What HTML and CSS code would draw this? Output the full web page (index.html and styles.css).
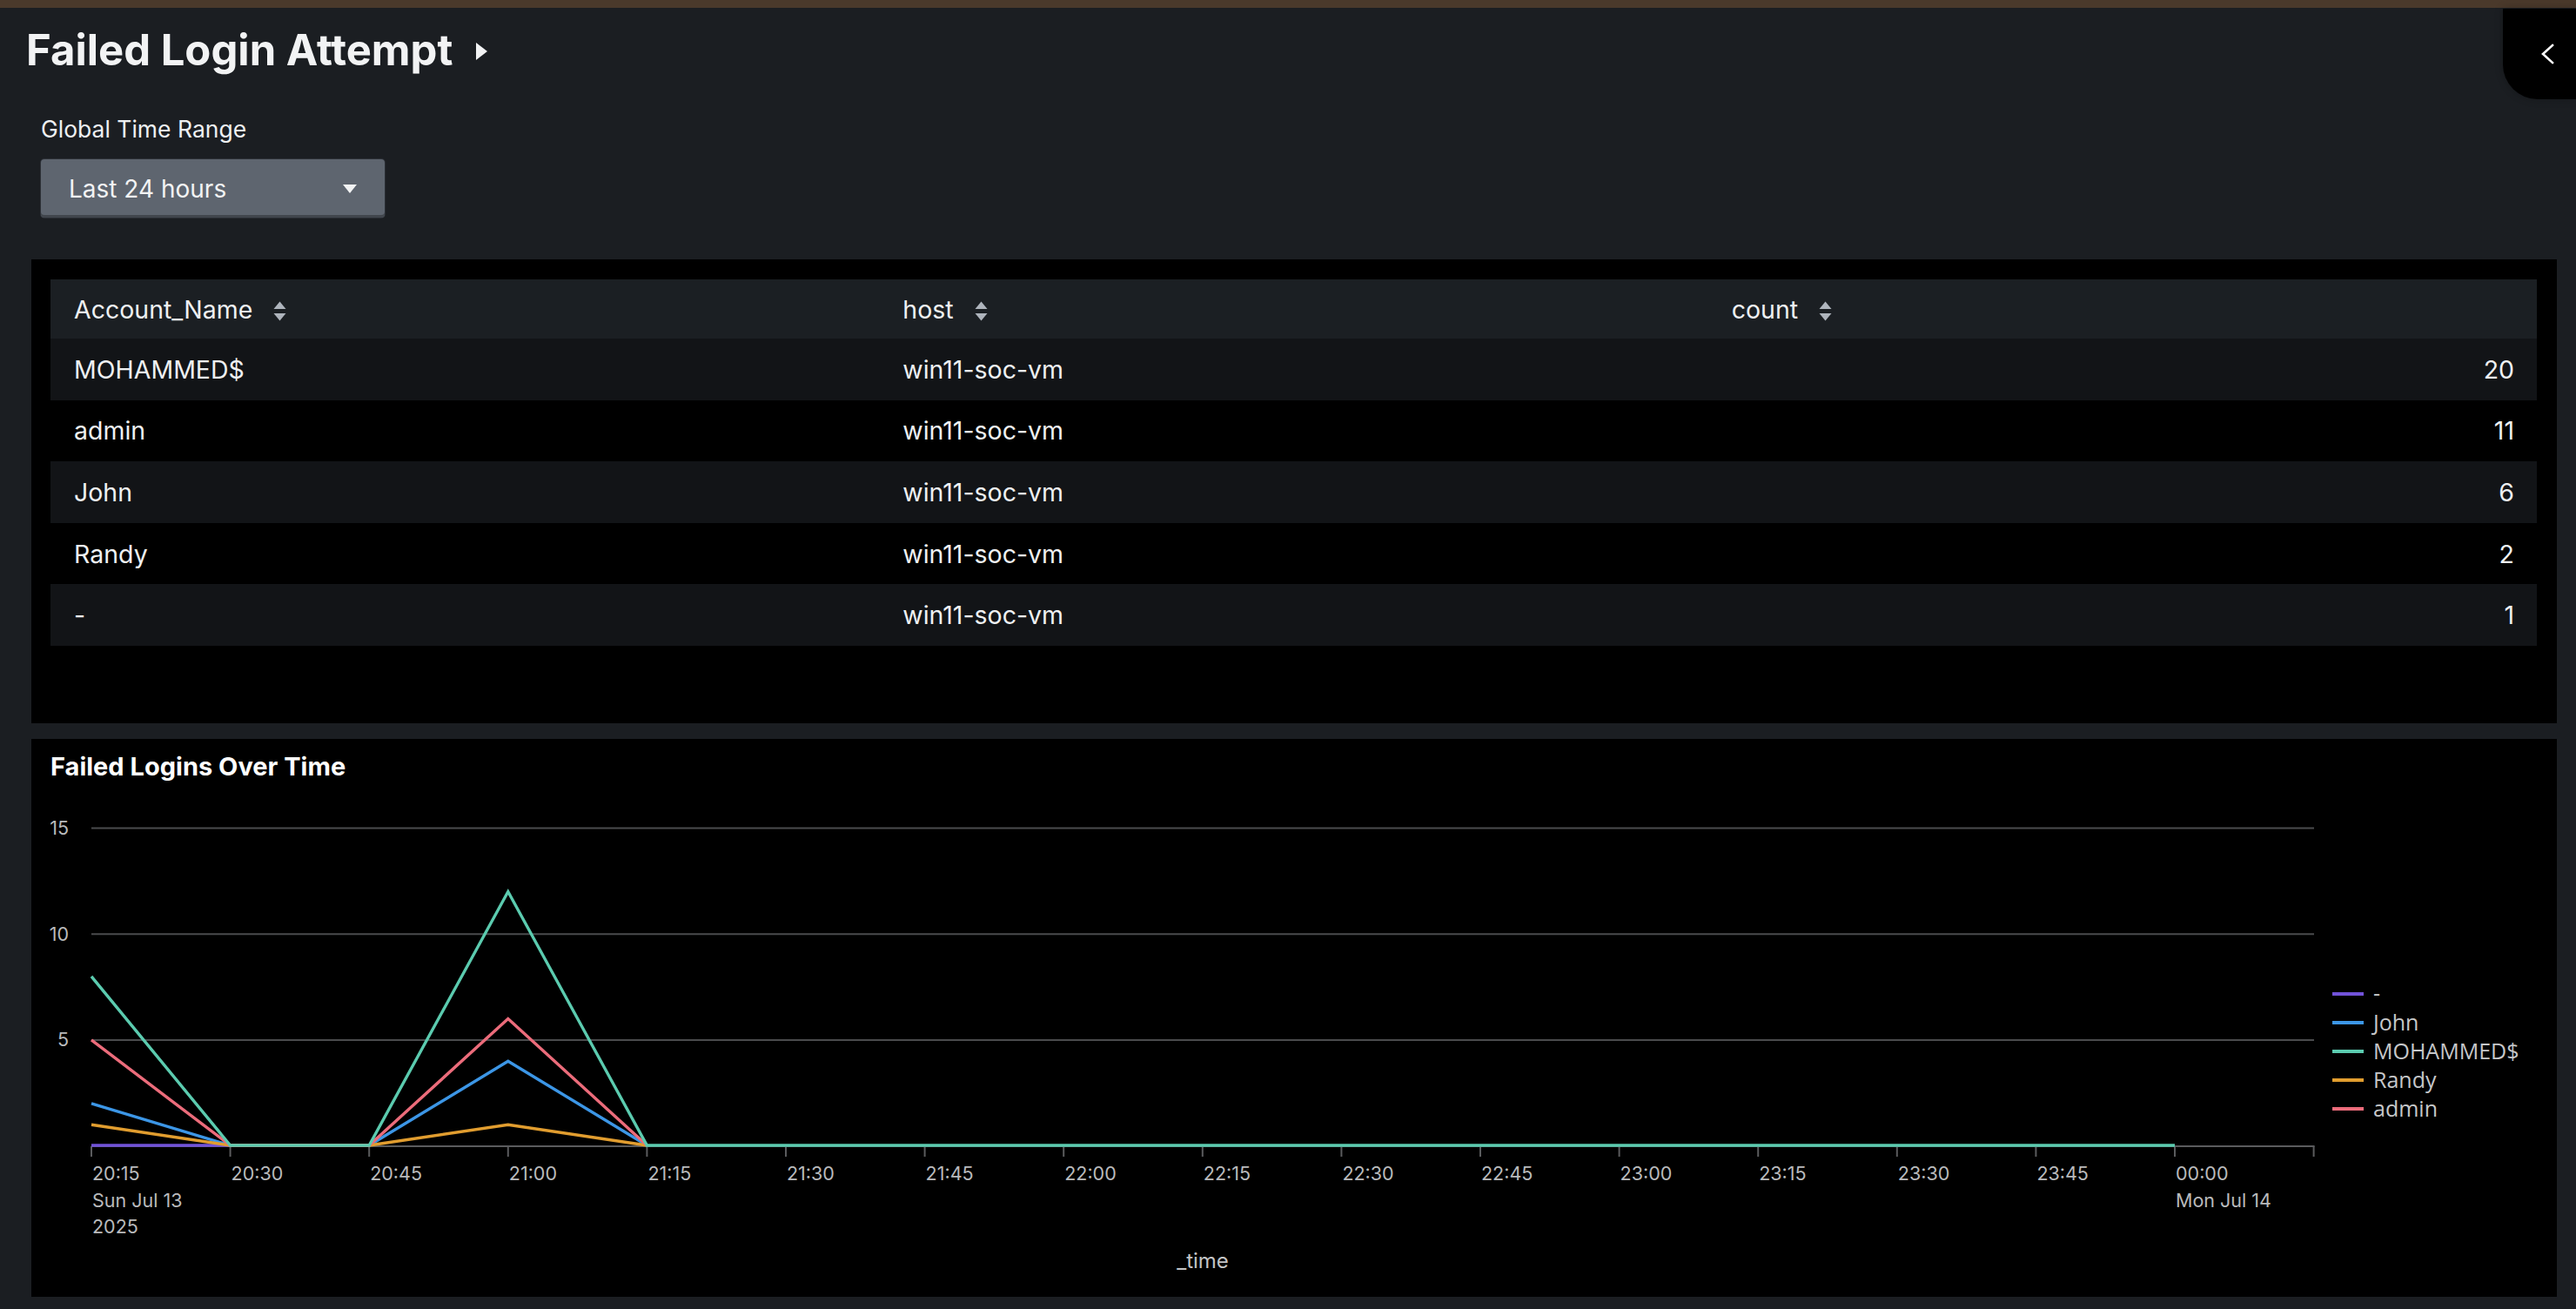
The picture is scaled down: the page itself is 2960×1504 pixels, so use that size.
FILE: index.html
```html
<!DOCTYPE html>
<html lang="en">
<head>
<meta charset="utf-8">
<title>Failed Login Attempt</title>
<link rel="stylesheet" href="styles.css">
</head>
<body>
<div class="topbar"></div>
<div class="side-tab">
  <svg class="side-chevron" width="16" height="24" viewBox="0 0 16 24"><polyline points="13,2 2,12 13,22" fill="none" stroke="#ffffff" stroke-width="2.6" stroke-linecap="square" stroke-linejoin="miter"/></svg>
</div>
<header class="dash-header">
  <h1 class="dash-title">Failed Login Attempt<svg class="title-caret" width="15" height="20" viewBox="0 0 15 20"><polygon points="1,0 14,10 1,20" fill="#f2f3f4"/></svg></h1>
  <div class="time-input">
    <span class="input-label">Global Time Range</span>
    <div class="dropdown">
      <span>Last 24 hours</span>
      <svg class="dropdown-caret" width="16" height="10" viewBox="0 0 16 10"><polygon points="0,0 16,0 8,10" fill="#f2f3f4"/></svg>
    </div>
  </div>
</header>
<main class="page">
  <section class="panel table-panel">
    <table class="data-table">
      <thead>
        <tr>
          <th>Account_Name<svg class="sort" width="15" height="23" viewBox="0 0 15 23"><polygon points="0.5,9 7.5,0.5 14.5,9"/><polygon points="0.5,14 14.5,14 7.5,22.5"/></svg></th>
          <th>host<svg class="sort" width="15" height="23" viewBox="0 0 15 23"><polygon points="0.5,9 7.5,0.5 14.5,9"/><polygon points="0.5,14 14.5,14 7.5,22.5"/></svg></th>
          <th>count<svg class="sort" width="15" height="23" viewBox="0 0 15 23"><polygon points="0.5,9 7.5,0.5 14.5,9"/><polygon points="0.5,14 14.5,14 7.5,22.5"/></svg></th>
        </tr>
      </thead>
      <tbody>
        <tr><td>MOHAMMED$</td><td>win11-soc-vm</td><td class="num">20</td></tr>
        <tr><td>admin</td><td>win11-soc-vm</td><td class="num">11</td></tr>
        <tr><td>John</td><td>win11-soc-vm</td><td class="num">6</td></tr>
        <tr><td>Randy</td><td>win11-soc-vm</td><td class="num">2</td></tr>
        <tr><td>-</td><td>win11-soc-vm</td><td class="num">1</td></tr>
      </tbody>
    </table>
  </section>
  <section class="panel chart-panel">
    <h2 class="panel-title">Failed Logins Over Time</h2>
    <svg class="chart" width="2902" height="570" viewBox="0 0 2902 570">
      <g class="grid">
        <line x1="69" y1="31.5" x2="2623" y2="31.5"/>
        <line x1="69" y1="153.2" x2="2623" y2="153.2"/>
        <line x1="69" y1="274.9" x2="2623" y2="274.9"/>
      </g>
      <g class="y-labels">
        <text x="43" y="39">15</text>
        <text x="43" y="160.7">10</text>
        <text x="43" y="282.4">5</text>
      </g>
      <g class="axis">
        <line x1="69" y1="397" x2="2623.6" y2="397"/>
        <path d="M69 397V409 M228.6 397V409 M388.2 397V409 M547.8 397V409 M707.4 397V409 M867 397V409 M1026.6 397V409 M1186.2 397V409 M1345.8 397V409 M1505.4 397V409 M1665 397V409 M1824.6 397V409 M1984.2 397V409 M2143.8 397V409 M2303.4 397V409 M2463 397V409 M2622.6 397V409"/>
      </g>
      <g class="x-labels">
        <text x="70" y="436">20:15</text>
        <text x="70" y="467">Sun Jul 13</text>
        <text x="70" y="497">2025</text>
        <text x="229.6" y="436">20:30</text>
        <text x="389.2" y="436">20:45</text>
        <text x="548.8" y="436">21:00</text>
        <text x="708.4" y="436">21:15</text>
        <text x="868" y="436">21:30</text>
        <text x="1027.6" y="436">21:45</text>
        <text x="1187.2" y="436">22:00</text>
        <text x="1346.8" y="436">22:15</text>
        <text x="1506.4" y="436">22:30</text>
        <text x="1666" y="436">22:45</text>
        <text x="1825.6" y="436">23:00</text>
        <text x="1985.2" y="436">23:15</text>
        <text x="2144.8" y="436">23:30</text>
        <text x="2304.4" y="436">23:45</text>
        <text x="2464" y="436">00:00</text>
        <text x="2464" y="467">Mon Jul 14</text>
      </g>
      <text class="axis-title" x="1346" y="537">_time</text>
      <g class="series">
        <polyline class="s-dash" points="69,396 228.6,396"/>
        <polyline class="s-john" points="69,347.9 228.6,396 388.2,396 547.8,299.2 707.4,396"/>
        <polyline class="s-randy" points="69,372.3 228.6,396 388.2,396 547.8,372.3 707.4,396"/>
        <polyline class="s-admin" points="69,274.9 228.6,396 388.2,396 547.8,250.6 707.4,396"/>
        <polyline class="s-moh" points="69,201.9 228.6,396 388.2,396 547.8,104.5 707.4,396 2463,396"/>
      </g>
      <g class="legend">
        <line class="s-dash" x1="2644" y1="222" x2="2680" y2="222"/>
        <text x="2691" y="230">-</text>
        <line class="s-john" x1="2644" y1="255" x2="2680" y2="255"/>
        <text x="2691" y="264">John</text>
        <line class="s-moh" x1="2644" y1="288" x2="2680" y2="288"/>
        <text x="2691" y="297">MOHAMMED$</text>
        <line class="s-randy" x1="2644" y1="321" x2="2680" y2="321"/>
        <text x="2691" y="330">Randy</text>
        <line class="s-admin" x1="2644" y1="354" x2="2680" y2="354"/>
        <text x="2691" y="363">admin</text>
      </g>
    </svg>
  </section>
</main>
</body>
</html>
```
FILE: styles.css
```css
html, body {
  margin: 0;
  padding: 0;
}

body {
  width: 2960px;
  height: 1504px;
  overflow: hidden;
  position: relative;
  background: #1b1e22;
  color: #eef0f2;
  font-family: Inter, "Liberation Sans", sans-serif;
}

.topbar {
  height: 9px;
  background: #4a392b;
}

.side-tab {
  position: absolute;
  top: 10px;
  right: 0;
  width: 84px;
  height: 104px;
  background: #000000;
  border-bottom-left-radius: 40px;
  box-shadow: 0 0 10px rgba(0, 0, 0, 0.25);
  display: flex;
  align-items: center;
  justify-content: flex-end;
  padding-right: 24px;
  box-sizing: border-box;
}

.dash-header {
  padding: 19px 0 0 30px;
}

.dash-title {
  margin: 0;
  font-size: 49px;
  line-height: 60px;
  font-weight: 700;
  color: #f2f3f4;
  display: flex;
  align-items: center;
}

.title-caret {
  margin-left: 26px;
  margin-top: 2px;
}

.time-input {
  margin-left: 17px;
  margin-top: 45px;
}

.input-label {
  display: block;
  font-size: 26.5px;
  line-height: 30px;
  color: #eef0f2;
}

.dropdown {
  margin-top: 20px;
  width: 395px;
  height: 67px;
  box-sizing: border-box;
  padding: 0 32px 0 32px;
  background: #5e656f;
  border-radius: 4px;
  box-shadow: inset 0 -3px 0 #41464d, 0 0 0 1px #2c3036;
  display: flex;
  align-items: center;
  justify-content: space-between;
  font-size: 28px;
  color: #f2f3f4;
}

.page {
  padding: 48px 22px 0 36px;
}

.panel {
  background: #000000;
  box-sizing: border-box;
}

.table-panel {
  height: 533px;
  padding: 23px 23px 0 22px;
}

.data-table {
  width: 100%;
  border-collapse: collapse;
  table-layout: fixed;
  font-size: 28.5px;
  color: #eef0f2;
}

.data-table th {
  height: 68px;
  padding: 0 27px;
  background: #1b1f23;
  text-align: left;
  font-weight: 400;
  white-space: nowrap;
}

.data-table td {
  height: 70.6px;
  padding: 0 27px;
  white-space: nowrap;
}

.data-table tbody tr:nth-child(odd) {
  background: #121417;
}

.data-table tbody tr:nth-child(even) {
  background: #000000;
}

.data-table td.num {
  text-align: right;
  padding-right: 26px;
}

.sort {
  margin-left: 24px;
  vertical-align: -3px;
  fill: #aeb4bc;
}

.chart-panel {
  margin-top: 18px;
  height: 641px;
  padding-top: 14px;
}

.panel-title {
  margin: 0 0 0 22px;
  font-size: 29px;
  line-height: 35px;
  font-weight: 700;
  color: #ffffff;
}

.chart {
  display: block;
  margin-top: 22px;
}

.grid line {
  stroke: #4a4b4d;
  stroke-width: 2;
}

.axis line,
.axis path {
  stroke: #5a5b5d;
  stroke-width: 2;
  fill: none;
}

.y-labels text {
  fill: #b9babc;
  font-size: 21.5px;
  text-anchor: end;
  font-family: Inter, "Liberation Sans", sans-serif;
}

.x-labels text {
  fill: #b9babc;
  font-size: 21.5px;
  font-family: Inter, "Liberation Sans", sans-serif;
}

.axis-title {
  fill: #c3c4c6;
  font-size: 24px;
  text-anchor: middle;
  font-family: Inter, "Liberation Sans", sans-serif;
}

.series polyline {
  fill: none;
  stroke-width: 3.4;
  stroke-linejoin: miter;
}

.legend line {
  stroke-width: 4;
}

.legend text {
  fill: #c6c7c9;
  font-size: 25px;
  font-family: "Open Sans", "Noto Sans", sans-serif;
}

.s-dash { stroke: #7152d9; }
.s-john { stroke: #3c96e6; }
.s-moh { stroke: #5bcbaf; }
.s-randy { stroke: #e19d2f; }
.s-admin { stroke: #ec6c7b; }
```
